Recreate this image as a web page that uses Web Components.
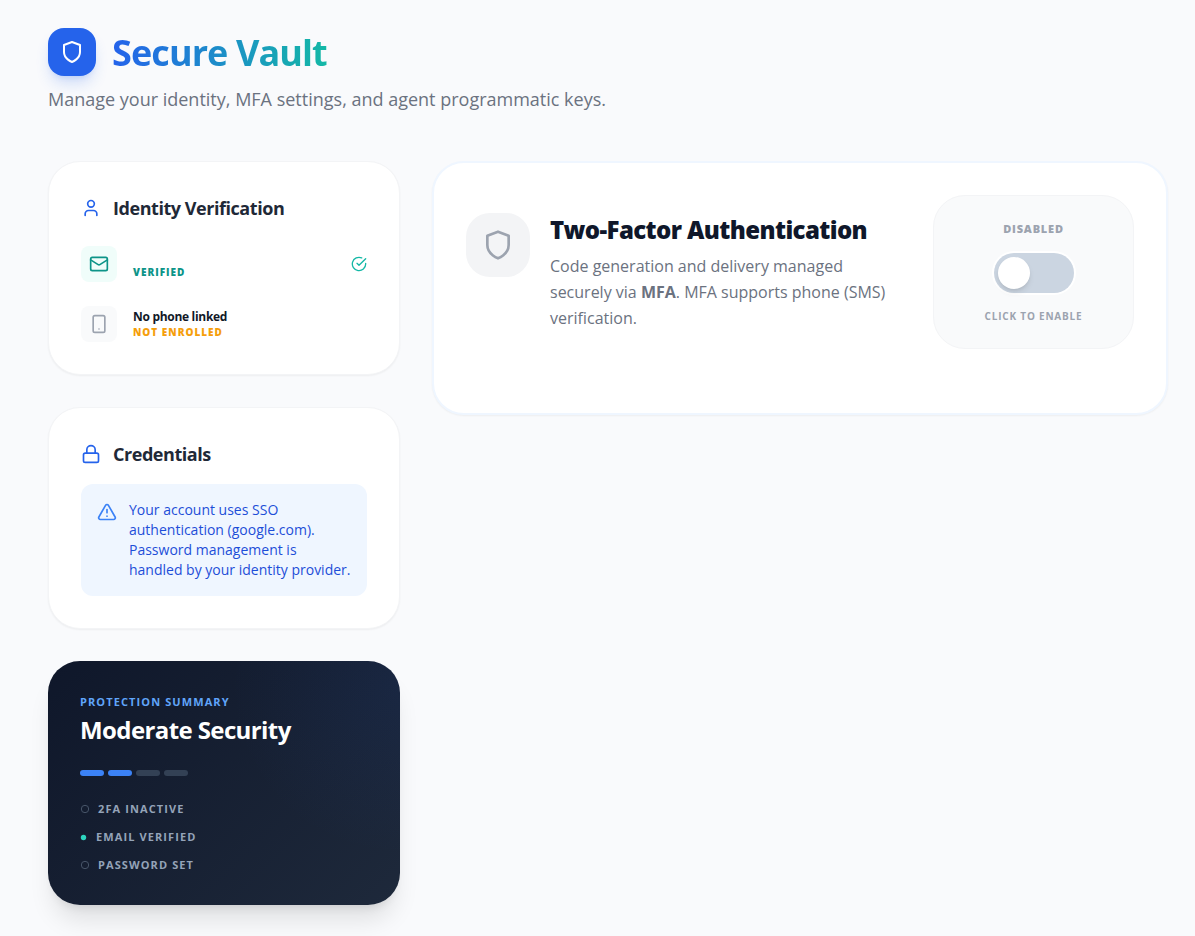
<!DOCTYPE html>
<html lang="en">
<head>
<meta charset="utf-8">
<meta name="viewport" content="width=device-width, initial-scale=1">
<title>Secure Vault</title>
<style>
  body { margin: 0; background: #f9fafc; color: #111827; font-family: "Open Sans", "Noto Sans", sans-serif; font-size: 16px; line-height: 24px; }
</style>
</head>
<body>
<vault-page>
  <vault-header slot="header" heading="Secure Vault">Manage your identity, MFA settings, and agent programmatic keys.</vault-header>
  <vault-card slot="side" icon="user" heading="Identity Verification" class="roomy">
    <factor-row icon="mail" tone="ok" status="Verified" checked></factor-row>
    <factor-row icon="phone" tone="warn" status="Not enrolled">No phone linked</factor-row>
  </vault-card>
  <vault-card slot="side" icon="lock" heading="Credentials">
    <info-note>Your account uses SSO authentication (google.com). Password management is handled by your identity provider.</info-note>
  </vault-card>
  <protection-summary slot="side" heading="Moderate Security" score="2"></protection-summary>
  <mfa-panel slot="main" heading="Two-Factor Authentication">Code generation and delivery managed securely via <strong>MFA</strong>. MFA supports phone (SMS) verification.</mfa-panel>
</vault-page>

<script>
const define = (name, render) => customElements.define(name, class extends HTMLElement {
  connectedCallback() {
    if (this.shadowRoot) return;
    this.attachShadow({ mode: 'open' }).innerHTML = '<style>*{box-sizing:border-box}h1,h2,h3,p,ul{margin:0}</style>' + render(this);
  }
});
const attr = (el, name) => el.getAttribute(name) || '';

const ICONS = {
  shield: '<path d="M12 22s8-3 8-10V5l-8-3-8 3v7c0 7 8 10 8 10z"/>',
  user: '<path d="M19 21v-2a4 4 0 0 0-4-4H9a4 4 0 0 0-4 4v2"/><circle cx="12" cy="7" r="4"/>',
  lock: '<rect x="3" y="11" width="18" height="11" rx="2"/><path d="M7 11V7a5 5 0 0 1 10 0v4"/>',
  mail: '<rect x="2" y="4" width="20" height="16" rx="2"/><path d="m22 7-8.97 5.7a1.94 1.94 0 0 1-2.06 0L2 7"/>',
  phone: '<rect x="5" y="2" width="14" height="20" rx="2"/><path d="M12 18h.01"/>',
  check: '<path d="M22 11.08V12a10 10 0 1 1-5.93-9.14"/><path d="m9 11 3 3L22 4"/>',
  alert: '<path d="m21.73 18-8-14a2 2 0 0 0-3.48 0l-8 14A2 2 0 0 0 4 21h16a2 2 0 0 0 1.73-3"/><path d="M12 9v4"/><path d="M12 17h.01"/>'
};
define('v-icon', el => `
  <style>:host{display:block;flex:none;width:var(--size,20px);height:var(--size,20px)} svg{display:block;width:100%;height:100%}</style>
  <svg viewBox="0 0 24 24" fill="none" stroke="currentColor" stroke-width="2" stroke-linecap="round" stroke-linejoin="round" aria-hidden="true">${ICONS[attr(el, 'name')]}</svg>`);

define('vault-page', () => `
  <style>
    :host{display:block;padding:28px 27px 31px 48px}
    .grid{display:grid;grid-template-columns:repeat(3,minmax(0,1fr));gap:32px;align-items:start;margin-top:48px}
    .side{display:flex;flex-direction:column;gap:32px}
    .main{grid-column:span 2}
  </style>
  <slot name="header"></slot>
  <div class="grid"><div class="side"><slot name="side"></slot></div><main class="main"><slot name="main"></slot></main></div>`);

define('vault-header', el => `
  <style>
    :host{display:block}
    .brand{display:flex;align-items:center;gap:16px;height:48px}
    .logo{display:grid;place-items:center;width:48px;height:48px;border-radius:16px;background:#2563eb;color:#fff;--size:24px;box-shadow:0 10px 15px -3px rgba(37,99,235,.2),0 4px 6px -4px rgba(37,99,235,.2)}
    h1{font-size:36px;line-height:45px;font-weight:700;letter-spacing:-0.025em;color:transparent;background:linear-gradient(90deg,#2563eb,#14b8a6);-webkit-background-clip:text;background-clip:text}
    p{margin-top:9px;font-size:18px;line-height:28px;color:#6b7280}
  </style>
  <div class="brand"><span class="logo"><v-icon name="shield"></v-icon></span><h1>${attr(el, 'heading')}</h1></div>
  <p><slot></slot></p>`);

define('vault-card', el => `
  <style>
    :host{display:block;box-sizing:border-box;padding:32px;border:1px solid #f3f4f6;border-radius:32px;background:#fff;box-shadow:0 1px 2px rgba(0,0,0,.05)}
    header{display:flex;align-items:center;gap:12px;color:#2563eb}
    h2{font-size:18px;line-height:28px;font-weight:700;letter-spacing:-0.025em;color:#1f2937}
    .body{display:flex;flex-direction:column;gap:24px;margin-top:16px}
    :host(.roomy) .body{margin-top:24px}
  </style>
  <header><v-icon name="${attr(el, 'icon')}"></v-icon><h2>${attr(el, 'heading')}</h2></header>
  <div class="body"><slot></slot></div>`);

define('factor-row', el => `
  <style>
    :host{display:flex;align-items:center;gap:16px;--tone:#0d9488}
    :host([tone=warn]){--tone:#f59e0b}
    .tile{display:grid;place-items:center;width:36px;height:36px;border-radius:8px;background:#f0fdfa;color:#0d9488}
    :host([tone=warn]) .tile{background:#f9fafb;color:#9ca3af}
    .text{flex:1;min-width:0}
    .name{min-height:16px;font-size:12px;line-height:16px;font-weight:700;letter-spacing:-0.025em;color:#111827}
    .status{font-size:10px;line-height:15px;font-weight:800;letter-spacing:0.1em;text-transform:uppercase;color:var(--tone)}
    .done{--size:16px;color:#14b8a6}
  </style>
  <span class="tile"><v-icon name="${attr(el, 'icon')}"></v-icon></span>
  <div class="text"><div class="name"><slot></slot></div><div class="status">${attr(el, 'status')}</div></div>
  ${el.hasAttribute('checked') ? '<v-icon class="done" name="check"></v-icon>' : ''}`);

define('info-note', () => `
  <style>
    :host{display:flex;gap:12px;padding:16px;border-radius:12px;background:#eff6ff;color:#3b82f6}
    v-icon{margin-top:2px}
    p{font-size:14px;line-height:20px;color:#1d4ed8}
  </style>
  <v-icon name="alert"></v-icon><p><slot></slot></p>`);

define('protection-summary', el => `
  <style>
    :host{display:block;box-sizing:border-box;padding:32px;border-radius:32px;color:#fff;
      background:radial-gradient(circle at 100% 10%,rgba(37,99,235,.07),transparent 170px),linear-gradient(135deg,#0f172a,#1e293b);
      box-shadow:0 20px 25px -5px rgba(0,0,0,.1),0 8px 10px -6px rgba(0,0,0,.1)}
    .label{font-size:11px;line-height:17px;font-weight:700;letter-spacing:0.1em;text-transform:uppercase;color:#60a5fa}
    h2{margin-top:4px;font-size:24px;line-height:32px;font-weight:700;letter-spacing:-0.025em}
    .meter{display:flex;gap:4px;margin:24px 0 25px}
    .meter i{width:24px;height:6px;border-radius:3px;background:#334155}
    .meter i.on{background:#3b82f6}
    ul{display:flex;flex-direction:column;gap:12px;padding:0;list-style:none;font-size:11px;line-height:16px;font-weight:700;letter-spacing:0.1em;text-transform:uppercase;color:#94a3b8}
    li{display:flex;align-items:center;gap:8px}
    .dot{width:10px;height:10px;flex:none}
    .dot.on{width:8px}
    svg{display:block;width:100%;height:100%}
  </style>
  <div class="label">Protection Summary</div>
  <h2>${attr(el, 'heading')}</h2>
  <div class="meter">${[0, 1, 2, 3].map(i => `<i class="${i < +attr(el, 'score') ? 'on' : ''}"></i>`).join('')}</div>
  <ul>${[['2FA Inactive', 0], ['Email Verified', 1], ['Password Set', 0]].map(([text, on]) => `
    <li><span class="dot ${on ? 'on' : ''}"><svg viewBox="0 0 ${on ? 8 : 10} 10" aria-hidden="true">${on
      ? '<circle cx="3.5" cy="5.5" r="2.7" fill="#2dd4bf"/>'
      : '<circle cx="5" cy="5" r="3.7" fill="none" stroke="#475569"/>'}</svg></span>${text}</li>`).join('')}</ul>`);

define('mfa-panel', el => `
  <style>
    :host{display:block;box-sizing:border-box;padding:32px 32px 64px;border:2px solid #eff6ff;border-radius:32px;background:#fff;box-shadow:0 1px 2px rgba(0,0,0,.05)}
    .row{display:flex;align-items:center;gap:32px}
    .info{display:flex;flex:1;align-items:flex-start;gap:20px;min-width:0}
    .tile{display:grid;place-items:center;flex:none;width:64px;height:64px;border-radius:24px;background:#f3f4f6;color:#9ca3af;--size:32px}
    h2{font-size:24px;line-height:34px;font-weight:800;letter-spacing:-0.025em;color:#0f172a}
    p{margin-top:6px;font-size:16px;line-height:26px;color:#6b7280}
    .switch{display:flex;flex-direction:column;align-items:center;gap:16px;flex:none;width:201px;padding:24px;border:1px solid #f3f4f6;border-radius:32px;background:#f9fafb;color:#9ca3af;font-weight:800;text-transform:uppercase;letter-spacing:0.05em}
    .state{font-size:11px;line-height:17px}
    .hint{font-size:10px;line-height:15px;font-weight:700}
    input{appearance:none;display:block;width:80px;height:40px;margin:0;padding:4px;border-radius:20px;background:#cbd5e1;box-shadow:0 0 0 2px #fff;cursor:pointer}
    input::before{content:"";display:block;width:32px;height:32px;border-radius:50%;background:#fff;box-shadow:0 4px 6px -1px rgba(0,0,0,.1),0 2px 4px -2px rgba(0,0,0,.1)}
    input:checked{background:#2563eb}
    input:checked::before{margin-left:40px}
  </style>
  <div class="row">
    <div class="info">
      <span class="tile"><v-icon name="shield"></v-icon></span>
      <div><h2>${attr(el, 'heading')}</h2><p><slot></slot></p></div>
    </div>
    <div class="switch">
      <label class="state" for="mfa">Disabled</label>
      <input id="mfa" type="checkbox" role="switch">
      <label class="hint" for="mfa">Click to enable</label>
    </div>
  </div>`);
</script>
</body>
</html>
